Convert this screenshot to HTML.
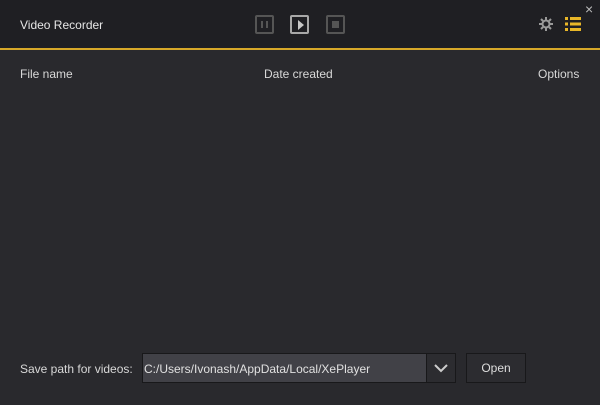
<!DOCTYPE html>
<html><head><style>
*{margin:0;padding:0;box-sizing:border-box}
body{width:600px;height:405px;background:#29292d;font-family:"Liberation Sans",sans-serif;font-size:12px;color:#d8d8d8;position:relative;overflow:hidden}
.hdr{position:absolute;left:0;top:0;width:600px;height:48px;background:#1f1f23}
.line{position:absolute;left:0;top:48px;width:600px;height:2px;background:#d7a829}
.t{position:absolute;white-space:nowrap}
.btn{position:absolute;top:15px;width:19px;height:19px;border:2px solid #555;border-radius:2px}
</style></head><body>
<div class="hdr"></div><div class="line"></div>
<div class="t" style="left:20px;top:18px;color:#e6e6e6">Video Recorder</div>
<div class="btn" style="left:255px"><div style="position:absolute;left:4px;top:4px;width:2px;height:7px;background:#555"></div><div style="position:absolute;left:9px;top:4px;width:2px;height:7px;background:#555"></div></div>
<div class="btn" style="left:290px;border-color:#a8a8a8"><div style="position:absolute;left:6px;top:3px;width:0;height:0;border-left:6px solid #c8c8c8;border-top:5px solid transparent;border-bottom:5px solid transparent"></div></div>
<div class="btn" style="left:326px"><div style="position:absolute;left:4px;top:4px;width:7px;height:7px;background:#555"></div></div>
<svg style="position:absolute;left:538px;top:16px" width="16" height="16" viewBox="0 0 16 16"><g stroke="#999" stroke-width="2" fill="none"><circle cx="8" cy="8" r="3.5"/><path d="M8 1v3M8 12v3M1 8h3M12 8h3M3 3l2 2M11 11l2 2M3 13l2-2M11 5l2-2"/></g></svg>
<svg style="position:absolute;left:565px;top:17px" width="16" height="14" viewBox="0 0 16 14"><g fill="#e8b628"><rect x="0" y="0" width="3" height="3"/><rect x="5" y="0" width="11" height="3"/><rect x="0" y="5.5" width="3" height="3"/><rect x="5" y="5.5" width="11" height="3"/><rect x="0" y="11" width="3" height="3"/><rect x="5" y="11" width="11" height="3"/></g></svg>
<div class="t" style="left:585px;top:1px;color:#bbb;font-size:14px">×</div>
<div class="t" style="left:20px;top:67px">File name</div>
<div class="t" style="left:264px;top:67px">Date created</div>
<div class="t" style="left:538px;top:67px">Options</div>
<div class="t" style="left:20px;top:362px">Save path for videos:</div>
<div style="position:absolute;left:142px;top:353px;width:285px;height:30px;background:#414147;border:1px solid #18181a"></div>
<div class="t" style="left:144px;top:362px;color:#e0e0e0">C:/Users/Ivonash/AppData/Local/XePlayer</div>
<div style="position:absolute;left:426px;top:353px;width:30px;height:30px;background:#2c2c30;border:1px solid #18181a"></div>
<svg style="position:absolute;left:433px;top:363px" width="16" height="10"><path d="M2 2l6 6 6-6" stroke="#ccc" stroke-width="2" fill="none"/></svg>
<div style="position:absolute;left:466px;top:353px;width:60px;height:30px;background:#2c2c30;border:1px solid #18181a;text-align:center;line-height:28px;color:#ddd">Open</div>
</body></html>
